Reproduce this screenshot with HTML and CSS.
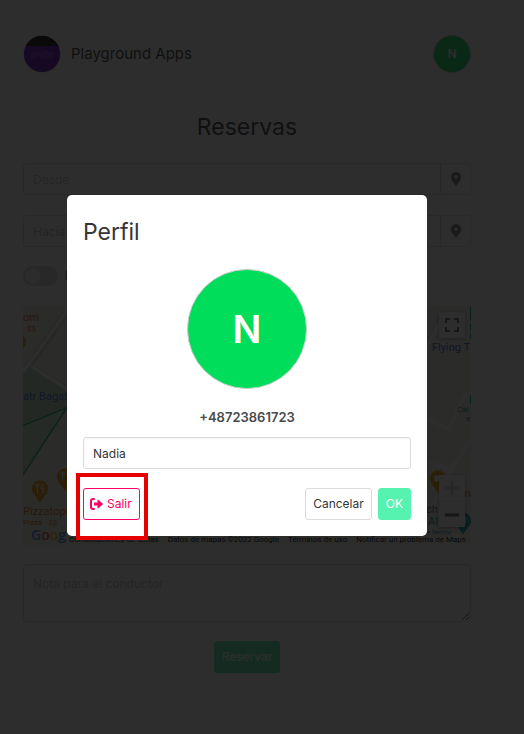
FILE: index.html
```html
<!DOCTYPE html>
<html lang="es">
<head>
<meta charset="utf-8">
<meta name="viewport" content="width=device-width, initial-scale=1">
<title>Reservas</title>
<link rel="stylesheet" href="styles.css">
</head>
<body>
<div class="app">
  <header class="topbar">
    <div class="brand">
      <svg class="brand-logo" viewBox="0 0 38 38" aria-hidden="true">
        <defs><clipPath id="disc"><circle cx="19" cy="19" r="18"/></clipPath></defs>
        <circle cx="19" cy="19" r="18.500" fill="#b5b5b5"/>
        <g clip-path="url(#disc)">
          <path fill="#5f00b4" d="M0 0h38v38H0z"/>
          <path fill="#000" d="M0 0h38v11H0z"/>
          <text class="logo-text" x="19" y="23" text-anchor="middle">ande</text>
        </g>
      </svg>
      <span class="brand-name">Playground Apps</span>
    </div>
    <button class="avatar avatar-small" type="button">N</button>
  </header>

  <main>
    <h1 class="heading page-heading">Reservas</h1>
    <form class="booking">
      <div class="addon">
        <input class="input" type="text" placeholder="Desde" aria-label="Desde">
        <button class="pin-button" type="button" aria-label="Elegir origen">
          <svg viewBox="0 0 10 14"><path fill-rule="evenodd" d="M5 0a5 5 0 0 0-5 5c0 3 2 5 5 9 3-4 5-6 5-9a5 5 0 0 0-5-5zm0 3.300a1.700 1.700 0 1 1 0 3.400 1.700 1.700 0 0 1 0-3.400z"/></svg>
        </button>
      </div>
      <div class="addon">
        <input class="input" type="text" placeholder="Hacia" aria-label="Hacia">
        <button class="pin-button" type="button" aria-label="Elegir destino">
          <svg viewBox="0 0 10 14"><path fill-rule="evenodd" d="M5 0a5 5 0 0 0-5 5c0 3 2 5 5 9 3-4 5-6 5-9a5 5 0 0 0-5-5zm0 3.300a1.700 1.700 0 1 1 0 3.400 1.700 1.700 0 0 1 0-3.400z"/></svg>
        </button>
      </div>
      <label class="switch"><input type="checkbox"><span>Reservar</span></label>

      <div class="map">
        <svg class="map-canvas" viewBox="0 0 448 240" preserveAspectRatio="xMidYMid slice" role="img" aria-label="Mapa">
          <path fill="#efeeea" d="M0 0h448v240H0z"/>
          <path fill="#b8ddc4" d="M44 10L8 62l36 22v18L0 168V66L44 6z"/>
          <path fill="#c6e8cf" d="M0 118l44-16L0 172z"/>
          <path fill="none" stroke="#fff" stroke-width="4" d="M0 66L46 2M8 60l40 26M390 70l30-60M384 150l44 14 20-30M396 110l30 14 16-36M380 100l16 40-14 60M410 200l30-56"/>
          <path fill="none" stroke="#c9cacc" d="M0 63L43 3M3 69L50 4M10 59l38 24M388 68l29-58"/>
          <path fill="none" stroke="#1fae6a" stroke-width="1.500" d="M0 120l44-18L0 169"/>
          <g fill="#f29900">
            <path d="M0 30a8 8 0 0 1 3 7 8 8 0 0 1-3 6z"/>
            <path d="M17 175a8 8 0 0 0-8 8c0 6 5 8 8 15 3-7 8-9 8-15a8 8 0 0 0-8-8z"/>
            <path d="M42 163a8 8 0 0 0-8 8c0 6 5 8 8 15 3-7 8-9 8-15a8 8 0 0 0-8-8z"/>
            <path d="M415 165a8 8 0 0 0-8 8c0 6 5 8 8 15 3-7 8-9 8-15a8 8 0 0 0-8-8z"/>
          </g>
          <path fill="none" stroke="#fff" d="M13 178v3q2 2 3 0v-3M14.500 178v10M20 188v-10q-2 2-2 5h2M38 166v3q2 2 3 0v-3M39.500 166v10"/>
          <path fill="#fff" d="M411 170h8l-1 6h-6z"/>
          <path fill="#009aa0" d="M440 207a8 8 0 0 0-8 8c0 6 5 8 8 14 3-6 8-8 8-14a8 8 0 0 0-8-8z"/>
          <path fill="#fff" d="M437 212h6v6h-6z"/>
          <path stroke="#009aa0" stroke-width="1" d="M447.500 1v14M447.500 18v7M447.500 28v5M447.500 90v8"/>
          <g class="map-food">
            <text x="0" y="15">om</text><text class="map-minor" x="0" y="25">· $$</text>
            <text x="0" y="209">Pizzatopi</text><text class="map-minor" x="0" y="219">Pizza · $$</text>
            <text x="438" y="191">m</text>
          </g>
          <g class="map-place"><text x="0" y="94">atr Bagat</text><text x="409" y="45">Flying T</text></g>
          <g class="map-culture">
            <text class="map-minor" x="434" y="106">Cal</text><text class="map-minor" x="443" y="115">e</text>
            <text x="403" y="207">ch</text><text x="405" y="219">Al</text><text class="map-minor" x="403" y="229">e terror</text>
          </g>
          <text class="google" x="8" y="234"><tspan fill="#4285f4">G</tspan><tspan fill="#ea4335">o</tspan><tspan fill="#fbbc05">o</tspan><tspan fill="#4285f4">g</tspan></text>
        </svg>
        <button class="map-control map-full" type="button" aria-label="Pantalla completa">
          <svg viewBox="0 0 14 14"><path d="M1 5V1h4M9 1h4v4M13 9v4H9M5 13H1V9"/></svg>
        </button>
        <div class="map-control map-zoom">
          <button type="button" aria-label="Acercar"><svg class="dim" viewBox="0 0 14 14"><path d="M7 0v14M0 7h14"/></svg></button>
          <button type="button" aria-label="Alejar"><svg viewBox="0 0 14 14"><path d="M0 7h14"/></svg></button>
        </div>
        <div class="map-legal"><span>Combinaciones de teclas</span><span>Datos de mapas ©2022 Google</span><span>Términos de uso</span><span>Notificar un problema de Maps</span></div>
      </div>

      <textarea class="input note" placeholder="Nota para el conductor" aria-label="Nota para el conductor"></textarea>
      <button class="button primary submit" type="button">Reservar</button>
    </form>
  </main>
</div>

<div class="overlay">
  <section class="modal" role="dialog" aria-modal="true" aria-labelledby="modal-title">
    <h2 class="heading" id="modal-title">Perfil</h2>
    <div class="avatar avatar-large">N</div>
    <p class="phone">+48723861723</p>
    <input class="input" type="text" value="Nadia" aria-label="Nombre">
    <div class="actions">
      <div class="highlight">
        <button class="button danger" type="button">
          <svg viewBox="0 0 13 12" aria-hidden="true"><path fill="none" stroke="currentColor" stroke-width="2" stroke-linecap="round" d="M4 1H3a2 2 0 0 0-2 2v6a2 2 0 0 0 2 2h1"/><path fill="currentColor" d="M4.500 4.500h3V2.200q0-1 .8-.4L12.600 5.500q.4.500 0 1L8.300 10.200q-.8.600-.8-.4V7.500h-3q-.5 0-.5-.5V5q0-.5.500-.5z"/></svg>
          Salir
        </button>
      </div>
      <div class="action-group">
        <button class="button" type="button">Cancelar</button>
        <button class="button primary" type="button">OK</button>
      </div>
    </div>
  </section>
</div>
</body>
</html>
```
FILE: styles.css
```css
* { box-sizing: border-box; }

body {
  margin: 0;
  background: #fff;
  color: #363636;
  font: 12px/20px Inter, "Liberation Sans", sans-serif;
}

button, input, textarea { font: inherit; color: inherit; }
button { cursor: pointer; }
h1, h2, p { margin: 0; }

.app { min-height: 100vh; padding: 35px 53px 60px 23px; }

.topbar, .brand { display: flex; align-items: center; }
.topbar { justify-content: space-between; }
.brand { gap: 10px; }
.brand-logo { width: 38px; height: 38px; }
.logo-text { fill: #8a40d0; font-size: 10px; }
.brand-name { font-size: 15px; }

.avatar {
  display: flex;
  align-items: center;
  justify-content: center;
  padding: 0;
  border: 1px solid #ccc;
  border-radius: 50%;
  background: #00dd5a;
  color: #fff;
  font-weight: 600;
}
.avatar-small { width: 38px; height: 38px; }
.avatar-large { width: 120px; height: 120px; margin: 0 auto; font-size: 38px; }

.heading { font-size: 23px; font-weight: 400; line-height: 30px; }
.page-heading { margin: 39px 0 21px; text-align: center; }

.booking { display: flex; flex-direction: column; }

.input {
  display: block;
  width: 100%;
  height: 32px;
  padding: 0 9px;
  border: 1px solid #dbdbdb;
  border-radius: 3px;
  background: #fff;
  outline: 0;
  box-shadow: inset 0 1px 2px rgba(10, 10, 10, .05);
}
.input::placeholder { color: #c3c3c3; opacity: 1; }

.addon { display: flex; margin-bottom: 20px; }
.addon .input { flex: 1; min-width: 0; border-radius: 3px 0 0 3px; }
.pin-button {
  display: flex;
  align-items: center;
  justify-content: center;
  width: 30px;
  padding: 0;
  border: 1px solid #e2e2e2;
  border-left: 0;
  border-radius: 0 3px 3px 0;
  background: #fff;
}
.pin-button svg { width: 10px; height: 14px; fill: #7a7a7a; }

.switch { display: flex; align-items: center; gap: 7px; height: 20px; margin: -1px 0 20px; }
.switch input {
  appearance: none;
  width: 35px;
  height: 20px;
  margin: 0;
  border-radius: 10px;
  background: radial-gradient(circle at 10px 10px, #f5f5f5 7px, #dbdbdb 8px);
}

.map { position: relative; height: 239px; margin-bottom: 19px; overflow: hidden; }
.map-canvas { display: block; width: 100%; height: 100%; font-family: Roboto, sans-serif; font-size: 11px; }
.map-minor { font-size: 8px; }
.map-food { fill: #d56e0c; }
.map-place { fill: #3367d6; }
.map-culture { fill: #12858d; }
.google { font-family: "Open Sans", sans-serif; font-size: 14px; font-weight: 600; }

.map-control {
  position: absolute;
  right: 6px;
  width: 26px;
  padding: 0;
  border: 0;
  background: #fff;
  box-shadow: 0 1px 3px rgba(0, 0, 0, .3);
}
.map-control svg { width: 14px; height: 14px; fill: none; stroke: #666; stroke-width: 2; }
.map-full { top: 6px; height: 26px; line-height: 0; }
.map-zoom { bottom: 18px; }
.map-zoom button { display: flex; align-items: center; justify-content: center; width: 100%; height: 26px; padding: 0; border: 0; background: none; }
.map-zoom button + button { border-top: 1px solid #e6e6e6; }
.map-zoom svg { stroke-width: 3; }
.map-zoom .dim { stroke: #ccc; }

.map-legal {
  position: absolute;
  right: 0;
  bottom: 0;
  display: flex;
  gap: 9px;
  padding: 0 5px 0 2px;
  background: rgba(245, 245, 245, .7);
  color: #000;
  font: 8px/11px Roboto, sans-serif;
  white-space: nowrap;
}

.note { height: 58px; padding: 9px; margin-bottom: 19px; resize: vertical; }

.button {
  display: inline-flex;
  align-items: center;
  justify-content: center;
  gap: 4px;
  height: 32px;
  padding: 0 7px;
  border: 1px solid #dbdbdb;
  border-radius: 3px;
  background: #fff;
  white-space: nowrap;
}
.primary { border-color: #56f2b0; background: #56f2b0; color: #fff; }
.submit { align-self: center; }
.danger { border-color: #f06; padding: 0 7px 0 6px; color: #f06; }
.danger svg { width: 13px; height: 12px; }

.overlay {
  position: fixed;
  inset: 0;
  display: flex;
  align-items: center;
  justify-content: center;
  padding: 0 30px 3px 0;
  background: rgba(10, 10, 10, .86);
}

.modal { width: 360px; max-width: 90%; padding: 22px 16px 16px; border-radius: 5px; background: #fff; }
.modal .heading { margin-bottom: 22px; }
.phone { margin: 18px 0 10px; color: #4a4a4a; font-size: 13px; font-weight: 600; text-align: center; }

.actions { display: flex; justify-content: space-between; margin-top: 19px; }
.action-group { display: flex; gap: 6px; }
.highlight { position: relative; }
.highlight::after {
  content: "";
  position: absolute;
  inset: -15px -8px -20px -7px;
  border: 4px solid #e60000;
  pointer-events: none;
}
```
